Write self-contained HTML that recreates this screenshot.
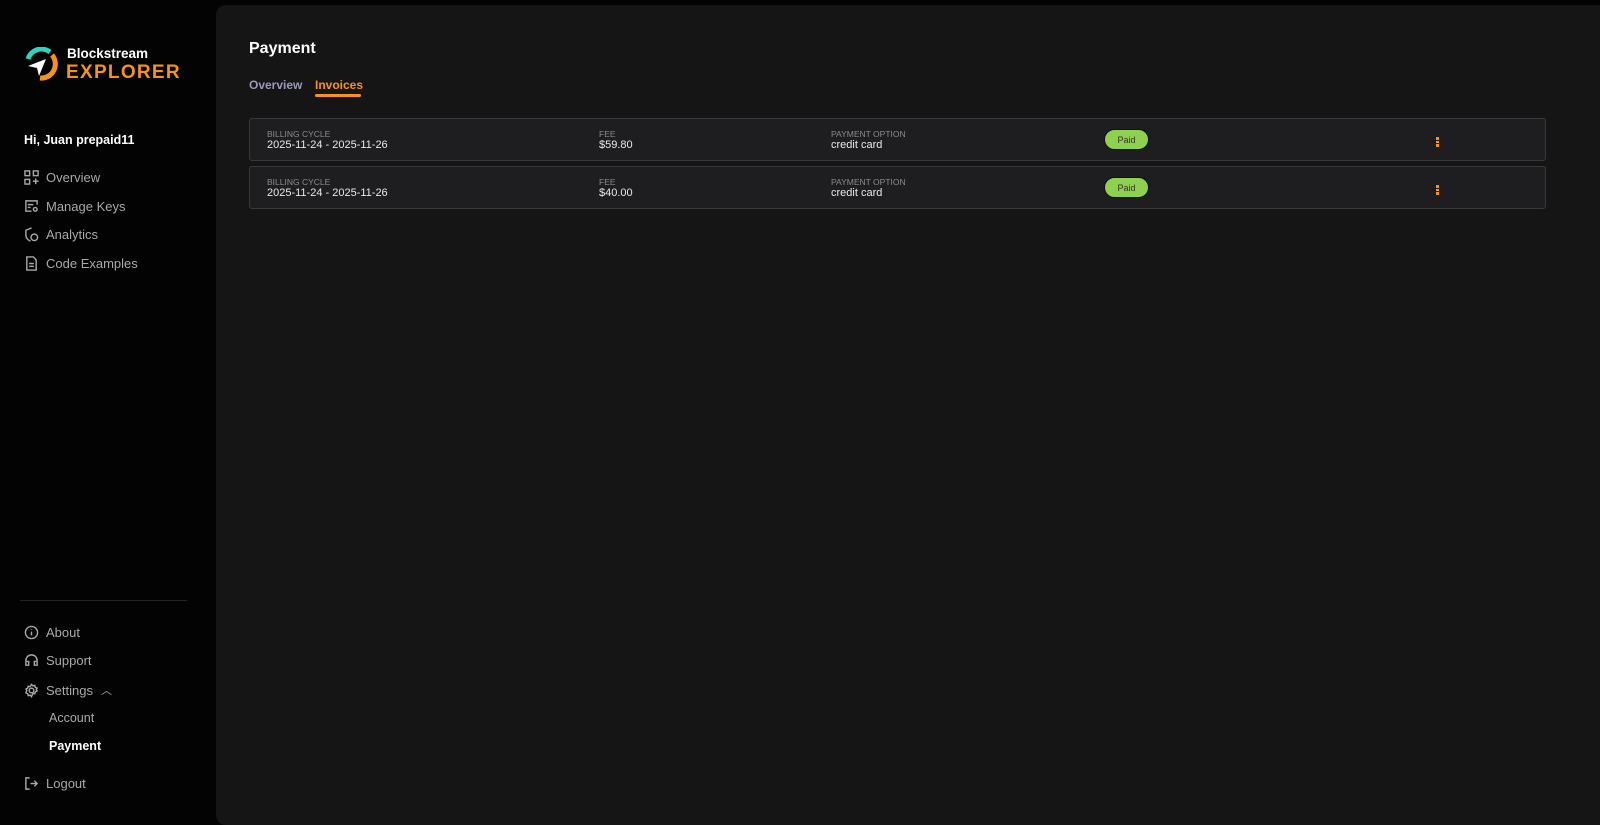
<!DOCTYPE html>
<html><head><meta charset="utf-8"><style>
*{box-sizing:border-box;margin:0;padding:0}
body{width:1600px;height:811px;background:#030303;font-family:"Liberation Sans",sans-serif;overflow:hidden;position:relative;color:#fff}
.side{position:absolute;left:0;top:0;width:216px;height:811px}
.nav{position:absolute;left:24px;display:flex;align-items:center;font-size:13px;color:#a8a8a8}
.nav svg{width:15px;height:15px;margin-right:7px;stroke:#a8a8a8;fill:none;stroke-width:1.5}
.main{position:absolute;left:216px;top:5px;width:1400px;height:820px;background:#151515;border-radius:10px}
.row{position:absolute;left:33px;width:1297px;height:43px;background:#1e1e20;border:1px solid #38383a;border-radius:3px}
.lbl{position:absolute;font-size:8.5px;color:#8a8a8a;top:10px}
.val{position:absolute;font-size:11px;color:#e8e8e8;top:20px}
.paid{position:absolute;left:854px;top:10px;width:45px;height:21px;border-radius:11px;background:#8fd14f;color:#333;font-size:9px;text-align:center;line-height:21px;border:1px solid #111}
.dots{position:absolute;left:1186px;top:18px;width:3px}
.dots i{display:block;width:2.5px;height:2.5px;background:#f7931a;margin-bottom:1px}
</style></head><body>
<div class="side">
<svg style="position:absolute;left:24px;top:47px" width="34" height="34" viewBox="0 0 34 34">
<path d="M4 12 A14 14 0 0 1 26 5" stroke="#2dd4bf" stroke-width="5" fill="none"/>
<path d="M28 8 A14 14 0 0 1 16 31" stroke="#f7931a" stroke-width="5" fill="none"/>
<path d="M4 19 L22 12 L15 29 L13 21 Z" fill="#fff"/>
</svg>
<div style="position:absolute;left:67px;top:46px;font-size:13.5px;font-weight:bold;color:#fff">Blockstream</div>
<div style="position:absolute;left:66px;top:62px;font-size:19px;font-weight:bold;color:#f7931a;letter-spacing:1.3px">EXPLORER</div>
<div style="position:absolute;left:24px;top:133px;font-size:12.5px;font-weight:bold">Hi, Juan prepaid11</div>
<div class="nav" style="top:170px"><svg viewBox="0 0 16 16"><rect x="1" y="1" width="5" height="5"/><rect x="10" y="1" width="5" height="5"/><rect x="1" y="10" width="5" height="5"/><path d="M12.5 9v6M9.5 12h6"/></svg>Overview</div>
<div class="nav" style="top:199px"><svg viewBox="0 0 16 16"><path d="M14 6V2H2v11h6M4 6h6M4 9h3"/><circle cx="12" cy="11" r="2"/></svg>Manage Keys</div>
<div class="nav" style="top:227px"><svg viewBox="0 0 16 16"><path d="M8 1L2 3.5v5C2 12 5 14.5 7 15"/><circle cx="11" cy="11" r="3.5"/></svg>Analytics</div>
<div class="nav" style="top:256px"><svg viewBox="0 0 16 16"><path d="M3 1h7l3 3v11H3z M5.5 8h5M5.5 11h5"/></svg>Code Examples</div>
<div style="position:absolute;left:20px;top:600px;width:167px;height:1px;background:#222"></div>
<div class="nav" style="top:625px"><svg viewBox="0 0 16 16"><circle cx="8" cy="8" r="6.5"/><path d="M8 7v4M8 4.5v.5"/></svg>About</div>
<div class="nav" style="top:653px"><svg viewBox="0 0 16 16"><path d="M2 11V8a6 6 0 0 1 12 0v3M2 9h3v4H2zM11 9h3v4h-3z"/></svg>Support</div>
<div class="nav" style="top:682px"><svg viewBox="0 0 16 16"><circle cx="8" cy="8" r="2.5"/><path d="M8 1.5l1.5 1.5 2-.5.5 2 2 1-1 1.5 1 1.5-2 1-.5 2-2-.5L8 14.5 6.5 13l-2 .5-.5-2-2-1L3 8 2 6.5l2-1 .5-2 2 .5z"/></svg>Settings<span style="margin-left:8px;font-size:11px">︿</span></div>
<div style="position:absolute;left:49px;top:711px;font-size:12.5px;color:#aaa">Account</div>
<div style="position:absolute;left:49px;top:739px;font-size:12.5px;color:#fff;font-weight:bold">Payment</div>
<div class="nav" style="top:776px"><svg viewBox="0 0 16 16"><path d="M6 2H2v12h4M7 8h7M11 5l3 3-3 3"/></svg>Logout</div>
</div>
<div class="main">
<div style="position:absolute;left:33px;top:35px;font-size:16px;font-weight:bold">Payment</div>
<div style="position:absolute;left:33px;top:73px;font-size:12px;font-weight:bold;color:#9a9ab8">Overview</div>
<div style="position:absolute;left:99px;top:73px;font-size:12px;font-weight:bold;color:#f7931a">Invoices</div>
<div style="position:absolute;left:99px;top:89px;width:46px;height:3px;border-radius:2px;background:#f7931a"></div>
<div class="row" style="top:113px">
<div class="lbl" style="left:17px">BILLING CYCLE</div><div class="val" style="left:17px">2025-11-24 - 2025-11-26</div>
<div class="lbl" style="left:349px">FEE</div><div class="val" style="left:349px">$59.80</div>
<div class="lbl" style="left:581px">PAYMENT OPTION</div><div class="val" style="left:581px">credit card</div>
<div class="paid">Paid</div><div class="dots"><i></i><i></i><i></i></div>
</div>
<div class="row" style="top:161px">
<div class="lbl" style="left:17px">BILLING CYCLE</div><div class="val" style="left:17px">2025-11-24 - 2025-11-26</div>
<div class="lbl" style="left:349px">FEE</div><div class="val" style="left:349px">$40.00</div>
<div class="lbl" style="left:581px">PAYMENT OPTION</div><div class="val" style="left:581px">credit card</div>
<div class="paid">Paid</div><div class="dots"><i></i><i></i><i></i></div>
</div>
</div>
</body></html>
